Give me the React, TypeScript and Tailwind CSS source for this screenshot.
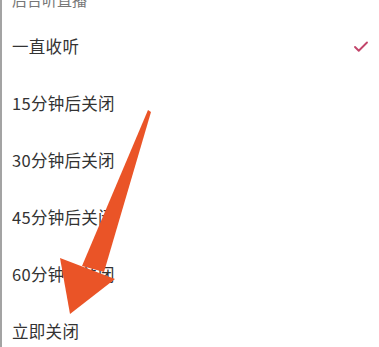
import { Check } from "lucide-react";

const options = ["一直收听", "15分钟后关闭", "30分钟后关闭", "45分钟后关闭", "60分钟后关闭", "立即关闭"];

export default function App() {
  return (
    <div
      className="relative h-[347px] w-[379px] overflow-hidden border-l-2 border-[#a3a3a3] bg-white"
      style={{ fontFamily: '"Noto Sans CJK SC", "Noto Sans", sans-serif' }}
    >
      <div className="-mt-[10px] h-[28px] pl-[10px] text-[15px] leading-[20px] text-[#777]">后台听直播</div>
      {options.map((label, i) => (
        <div key={label} className="flex h-[57px] items-center justify-between pl-[10px] pr-[9px]">
          <span className="text-[16.5px] tracking-[0.3px] text-[#333]">{label}</span>
          {i === 0 && <Check className="size-[18px] text-[#c2456a]" strokeWidth={2.5} />}
        </div>
      ))}

      {/* annotation arrow */}
      <svg className="pointer-events-none absolute left-0 top-0" width="379" height="347" viewBox="0 0 379 347">
        <polygon points="146,110 149,112 102,272 80,266" fill="#ea5427" />
        <polygon points="58,258 113,279 68,314" fill="#ea5427" />
      </svg>
    </div>
  );
}
